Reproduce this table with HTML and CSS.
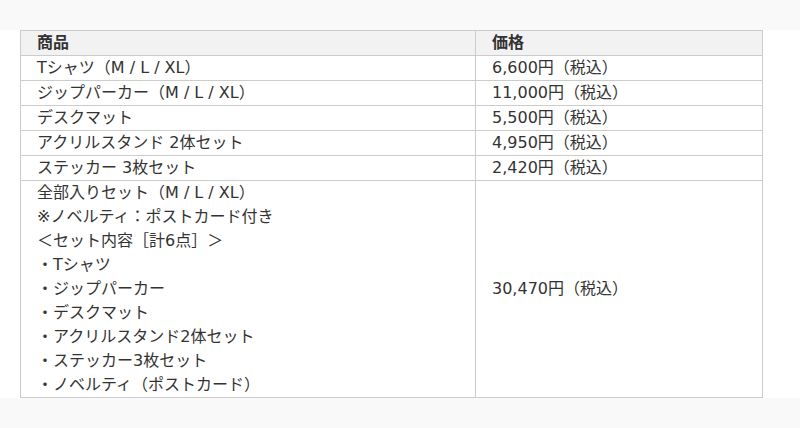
FILE: index.html
```html
<!DOCTYPE html>
<html lang="ja">
<head>
<meta charset="utf-8">
<title>商品価格</title>
<link rel="stylesheet" href="styles.css">
</head>
<body>
<div class="band">
  <table class="price-table">
    <colgroup>
      <col class="col-item">
      <col class="col-price">
    </colgroup>
    <thead>
      <tr><th>商品</th><th>価格</th></tr>
    </thead>
    <tbody>
      <tr><td>Tシャツ（M / L / XL）</td><td>6,600円（税込）</td></tr>
      <tr><td>ジップパーカー（M / L / XL）</td><td>11,000円（税込）</td></tr>
      <tr><td>デスクマット</td><td>5,500円（税込）</td></tr>
      <tr><td>アクリルスタンド 2体セット</td><td>4,950円（税込）</td></tr>
      <tr><td>ステッカー 3枚セット</td><td>2,420円（税込）</td></tr>
      <tr>
        <td>全部入りセット（M / L / XL）<br>※ノベルティ：ポストカード付き<br>＜セット内容［計6点］＞<br>・Tシャツ<br>・ジップパーカー<br>・デスクマット<br>・アクリルスタンド2体セット<br>・ステッカー3枚セット<br>・ノベルティ（ポストカード）</td>
        <td>30,470円（税込）</td>
      </tr>
    </tbody>
  </table>
</div>
</body>
</html>
```
FILE: styles.css
```css
html, body {
  margin: 0;
  padding: 0;
}
body {
  background: #f9f9f9;
  padding-top: 30px;
  font-family: "DejaVu Sans", "Noto Sans CJK JP", sans-serif;
  font-size: 16px;
  color: #333;
}
.band {
  background: #fff;
  padding: 0 0 0 20px;
}
.price-table {
  border-collapse: collapse;
  table-layout: fixed;
  width: 742px;
}
.col-item { width: 455px; }
.col-price { width: 287px; }
.price-table th,
.price-table td {
  border: 1px solid #ccc;
  padding: 0 16px;
  line-height: 24px;
  text-align: left;
  vertical-align: middle;
}
.price-table th {
  background: #f2f2f2;
  font-weight: bold;
}
```
